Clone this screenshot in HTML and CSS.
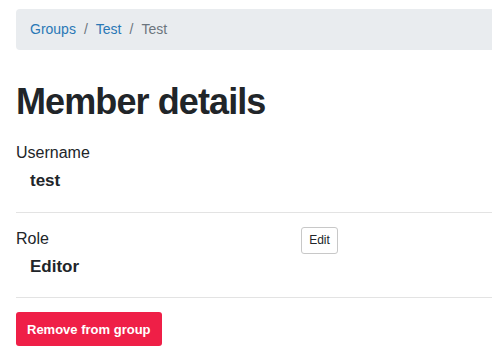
FILE: index.html
```html
<!DOCTYPE html>
<html>
	<head>
		<title>Member details</title>
		<link rel="stylesheet" href="styles.css">
	</head>
	<body>
	<div class="page">
		<ol class="crumbs">
			<li><a href="#">Groups</a></li>
			<li class="sep">/</li>
			<li><a href="#">Test</a></li>
			<li class="sep">/</li>
			<li class="current">Test</li>
		</ol>
		<h1>Member details</h1>
		<div class="field">
			<div class="cell">
				<div class="label">Username</div>
				<div class="value">test</div>
			</div>
		</div>
		<div class="field">
			<div class="cell">
				<div class="label">Role</div>
				<div class="value">Editor</div>
			</div>
			<div class="cell">
				<button class="edit">Edit</button>
			</div>
		</div>
		<div class="actions">
			<button class="remove">Remove from group</button>
		</div>
	</div>
	</body>
</html>
```

FILE: styles.css
```css
html, body {
	margin: 0;
	overflow: hidden;
}
body {
	font-family: "Liberation Sans", Arial, sans-serif;
	color: #212529;
	background: #fff;
}
.page {
	padding: 9px 0 9px 16px;
}
.crumbs {
	display: flex;
	margin: 0;
	padding: 10px 14px;
	list-style: none;
	background-color: #e9ecef;
	border-radius: 4px 0 0 4px;
	font-size: 14px;
	line-height: 21px;
}
.crumbs a {
	color: #2a78b6;
	text-decoration: none;
}
.crumbs .sep {
	padding: 0 8px;
	color: #6c757d;
}
.crumbs .current {
	color: #6c757d;
}
h1 {
	margin: 30px 0 4px;
	font-size: 36px;
	line-height: 1.2;
	font-weight: bold;
	letter-spacing: -0.9px;
}
.field {
	display: grid;
	grid-template-columns: 285px 1fr;
	padding: 14px 0 18px;
	border-bottom: 1px solid #e3e3e3;
}
.label {
	font-size: 16px;
	line-height: 24px;
	margin-bottom: 3px;
}
.value {
	padding-left: 14px;
	font-size: 17px;
	line-height: 25.5px;
	font-weight: bold;
}
button.edit {
	height: 27px;
	width: 37px;
	padding: 0;
	font-family: "Liberation Sans", Arial, sans-serif;
	font-size: 12px;
	color: #212529;
	background-color: #fff;
	border: 1px solid #c8c8c8;
	border-radius: 3px;
}
.actions {
	padding-top: 14px;
}
button.remove {
	height: 34px;
	padding: 0 11px;
	font-family: "Liberation Sans", Arial, sans-serif;
	font-size: 13px;
	font-weight: bold;
	color: #fff;
	background-color: #ef1f47;
	border: 0;
	border-radius: 3px;
}
```
